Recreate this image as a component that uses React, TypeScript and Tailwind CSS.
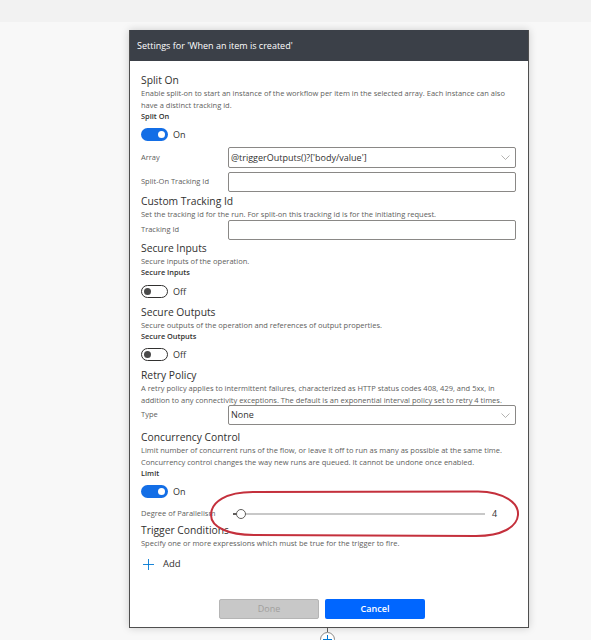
import React from "react";

const font = "font-['Open_Sans','Noto_Sans',sans-serif]";

function Title({ children, className = "" }: { children: React.ReactNode; className?: string }) {
  return <div className={`text-[10.3px] leading-[14px] text-[#323130] ${className}`}>{children}</div>;
}

function Desc({ lines }: { lines: string[] }) {
  return (
    <div className="text-[7.5px] leading-[12px] text-[#605e5c]">
      {lines.map((l, i) => (
        <div key={i} className="whitespace-nowrap">{l}</div>
      ))}
    </div>
  );
}

function Label({ children }: { children: React.ReactNode }) {
  return <div className="text-[7.4px] leading-[11px] font-semibold text-[#323130]">{children}</div>;
}

function Toggle({ on, className = "" }: { on: boolean; className?: string }) {
  return (
    <div className={`flex h-[13px] items-center gap-[5px] ${className}`}>
      {on ? (
        <div className="flex h-[13px] w-[27px] items-center justify-end rounded-full bg-[#136ee6] pr-[3px]">
          <div className="h-[7px] w-[7px] rounded-full bg-white" />
        </div>
      ) : (
        <div className="flex h-[13px] w-[27px] items-center justify-start rounded-full border border-[#323130] bg-white pl-[2px]">
          <div className="h-[7px] w-[7px] rounded-full bg-[#4a4a4a]" />
        </div>
      )}
      <span className="text-[9px] text-[#323130]">{on ? "On" : "Off"}</span>
    </div>
  );
}

function Chevron() {
  return (
    <svg width="9" height="5" viewBox="0 0 9 5" className="shrink-0">
      <polyline points="0.5,0.5 4.5,4.5 8.5,0.5" fill="none" stroke="#a19f9d" strokeWidth="0.8" />
    </svg>
  );
}

function Field({
  label,
  value,
  select,
  h = "h-[21px]",
  className = "",
}: {
  label: string;
  value?: string;
  select?: boolean;
  h?: string;
  className?: string;
}) {
  return (
    <div className={`flex ${h} items-stretch ${className}`}>
      <div className="flex w-[87px] items-center text-[7.5px] text-[#605e5c]">{label}</div>
      <div className="flex flex-1 items-center justify-between rounded-[2px] border border-[#8a8886] bg-white pl-[2px] pr-[5px]">
        <span className="text-[9px] text-[#323130] whitespace-nowrap">{value ?? ""}</span>
        {select ? <Chevron /> : null}
      </div>
    </div>
  );
}

export default function App() {
  return (
    <div className={`relative h-[640px] w-[591px] overflow-hidden bg-[#f8f8f8] ${font}`}>
      <div className="h-[22px] bg-[#f2f2f2]" />
      <div className="pl-[129px] pt-[8px]">
        <div className="w-[400px] border border-t-0 border-[#4f4f4f] bg-white shadow-[0_0_8px_rgba(0,0,0,0.18)]">
          <div className="flex h-[31px] items-center bg-[#3b4048] pl-[7px] text-[9px] text-white">
            Settings for 'When an item is created'
          </div>
          <div className="flex flex-col pb-[8px] pl-[11px] pr-[12px] pt-[12px]">
            <Title>Split On</Title>
            <Desc
              lines={[
                "Enable split-on to start an instance of the workflow per item in the selected array. Each instance can also",
                "have a distinct tracking id.",
              ]}
            />
            <Label>Split On</Label>
            <Toggle on className="mt-[6px]" />
            <Field label="Array" value="@triggerOutputs()?['body/value']" select className="mt-[6px]" />
            <Field label="Split-On Tracking Id" h="h-[20px]" className="mt-[4px]" />

            <Title className="mt-[2px]">Custom Tracking Id</Title>
            <Desc lines={["Set the tracking id for the run. For split-on this tracking id is for the initiating request."]} />
            <Field label="Tracking Id" h="h-[20px]" />

            <Title className="mt-[1px]">Secure Inputs</Title>
            <Desc lines={["Secure inputs of the operation."]} />
            <Label>Secure Inputs</Label>
            <Toggle on={false} className="mt-[7px]" />

            <Title className="mt-[7px]">Secure Outputs</Title>
            <Desc lines={["Secure outputs of the operation and references of output properties."]} />
            <Label>Secure Outputs</Label>
            <Toggle on={false} className="mt-[6px]" />

            <Title className="mt-[7px]">Retry Policy</Title>
            <Desc
              lines={[
                "A retry policy applies to intermittent failures, characterized as HTTP status codes 408, 429, and 5xx, in",
                "addition to any connectivity exceptions. The default is an exponential interval policy set to retry 4 times.",
              ]}
            />
            <Field label="Type" value="None" select h="h-[20px]" className="-mt-[1px]" />

            <Title className="mt-[5px]">Concurrency Control</Title>
            <Desc
              lines={[
                "Limit number of concurrent runs of the flow, or leave it off to run as many as possible at the same time.",
                "Concurrency control changes the way new runs are queued. It cannot be undone once enabled.",
              ]}
            />
            <Label>Limit</Label>
            <Toggle on className="mt-[6px]" />

            <div className="mt-[8px] flex h-[16px] items-center">
              <div className="w-[92px] text-[7.5px] text-[#605e5c] whitespace-nowrap">Degree of Parallelism</div>
              <div className="relative h-[2px] w-[252px] bg-[#c8c8c8]">
                <div className="h-[2px] w-[5px] bg-[#605e5c]" />
                <div className="absolute left-[3px] top-[-4px] h-[10px] w-[10px] rounded-full border border-[#605e5c] bg-white" />
              </div>
              <span className="ml-[7px] text-[9px] text-[#323130]">4</span>
            </div>

            <Title className="mt-[1px]">Trigger Conditions</Title>
            <Desc lines={["Specify one or more expressions which must be true for the trigger to fire."]} />

            <div className="mt-[7px] flex h-[16px] items-center gap-[9px] pl-[2px]">
              <svg width="11" height="11" viewBox="0 0 11 11">
                <line x1="5.5" y1="0" x2="5.5" y2="11" stroke="#0078d4" strokeWidth="0.9" />
                <line x1="0" y1="5.5" x2="11" y2="5.5" stroke="#0078d4" strokeWidth="0.9" />
              </svg>
              <span className="text-[9.5px] text-[#323130]">Add</span>
            </div>

            <div className="mt-[27px] flex gap-[6px] pl-[78px]">
              <div className="flex h-[20px] w-[100px] items-center justify-center rounded-[2px] border border-[#b5b5b5] bg-[#c8c8c8] text-[9px] text-[#a19f9d]">
                Done
              </div>
              <div className="flex h-[20px] w-[100px] items-center justify-center rounded-[2px] bg-[#0066ff] text-[9px] font-semibold text-white">
                Cancel
              </div>
            </div>
          </div>
        </div>
        <div className="ml-[198px] h-[4px] w-px bg-[#605e5c]" />
        <div className="ml-[191px] flex h-[15px] w-[15px] items-center justify-center rounded-full border border-[#8a8886] bg-white">
          <svg width="9" height="9" viewBox="0 0 9 9">
            <line x1="4.5" y1="0" x2="4.5" y2="9" stroke="#0078d4" strokeWidth="1" />
            <line x1="0" y1="4.5" x2="9" y2="4.5" stroke="#0078d4" strokeWidth="1" />
          </svg>
        </div>
      </div>

      <svg className="absolute left-[208px] top-[489px]" width="313" height="50" viewBox="0 0 313 50">
        <path
          d="M 45 3 L 270 2.5 C 296 3 311 14 310 26 C 309 38 294 47 268 47 L 46 46 C 20 46 3 38 3 26 C 3 13 18 3 45 3 Z"
          fill="none"
          stroke="#c4303c"
          strokeWidth="2"
        />
      </svg>
    </div>
  );
}
